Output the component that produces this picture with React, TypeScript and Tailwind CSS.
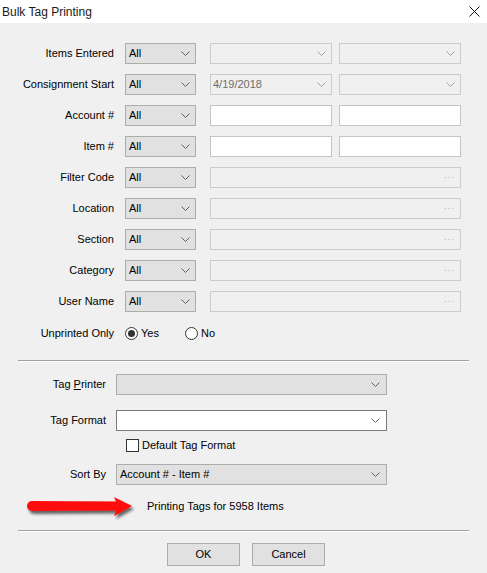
import React from "react";

const FONT = { fontFamily: '"Segoe UI", "Liberation Sans", Arial, sans-serif' };

const Chevron = ({ color = "#606060" }: { color?: string }) => (
  <svg width="9" height="5" viewBox="0 0 9 5" className="shrink-0">
    <path d="M0.5 0.5 L4.5 4.5 L8.5 0.5" fill="none" stroke={color} strokeWidth="1" />
  </svg>
);

function AllCombo() {
  return (
    <div className="w-[71px] h-[21px] flex items-center justify-between pl-[3px] pr-[5px] bg-[#e1e1e1] border border-[#adadad]">
      <span>All</span>
      <Chevron />
    </div>
  );
}

function DisabledCombo({ text }: { text?: string }) {
  return (
    <div className="w-[122px] h-[21px] flex items-center justify-between pl-[2px] pr-[5px] bg-[#f0f0f0] border border-[#cccccc]">
      <span className="text-[#6d6d6d]">{text}</span>
      <Chevron color="#a0a0a0" />
    </div>
  );
}

function TextBox() {
  return <div className="w-[122px] h-[21px] bg-white border border-[#c4c4c4]" />;
}

function EllipsisBox() {
  return (
    <div className="w-[251px] h-[21px] flex items-center justify-end pr-[5px] bg-[#f0f0f0] border border-[#cccccc]">
      <span className="text-[8px] tracking-[1px] text-[#a0a0a0] leading-none">···</span>
    </div>
  );
}

type Filter = { label: string; kind: "combo" | "date" | "text" | "ellipsis" };

const FILTERS: Filter[] = [
  { label: "Items Entered", kind: "combo" },
  { label: "Consignment Start", kind: "date" },
  { label: "Account #", kind: "text" },
  { label: "Item #", kind: "text" },
  { label: "Filter Code", kind: "ellipsis" },
  { label: "Location", kind: "ellipsis" },
  { label: "Section", kind: "ellipsis" },
  { label: "Category", kind: "ellipsis" },
  { label: "User Name", kind: "ellipsis" },
];

function FilterRow({ label, kind }: Filter) {
  return (
    <div className="flex items-center h-[21px]">
      <div className="w-[115px] text-right pr-[1px]">{label}</div>
      <div className="ml-[10px]">
        <AllCombo />
      </div>
      <div className="ml-[14px] flex gap-[7px]">
        {kind === "combo" && (
          <>
            <DisabledCombo />
            <DisabledCombo />
          </>
        )}
        {kind === "date" && (
          <>
            <DisabledCombo text="4/19/2018" />
            <DisabledCombo />
          </>
        )}
        {kind === "text" && (
          <>
            <TextBox />
            <TextBox />
          </>
        )}
        {kind === "ellipsis" && <EllipsisBox />}
      </div>
    </div>
  );
}

function Radio({ checked, label }: { checked?: boolean; label: string }) {
  return (
    <div className="flex items-center">
      <div className="w-[13px] h-[13px] rounded-full border border-[#333333] bg-white flex items-center justify-center">
        {checked && <div className="w-[7px] h-[7px] rounded-full bg-[#333333]" />}
      </div>
      <span className="ml-[3px]">{label}</span>
    </div>
  );
}

function BigCombo({ text, tone }: { text?: string; tone: "gray" | "white" }) {
  return (
    <div
      className={
        tone === "white"
          ? "w-[271px] h-[21px] flex items-center justify-between pl-[3px] pr-[6px] bg-white border border-[#7a7a7a]"
          : "w-[271px] h-[21px] flex items-center justify-between pl-[3px] pr-[6px] bg-[#e1e1e1] border border-[#adadad]"
      }
    >
      <span>{text}</span>
      <Chevron />
    </div>
  );
}

function Separator() {
  return <div className="mx-[18px] h-[2px] border-t border-[#a0a0a0] border-b border-b-white" />;
}

function RedArrow() {
  return (
    <svg width="112" height="30" viewBox="0 0 112 30">
      <defs>
        <filter id="sh" x="-10%" y="-30%" width="130%" height="180%">
          <feDropShadow dx="2" dy="3" stdDeviation="1.5" floodColor="#000" floodOpacity="0.6" />
        </filter>
      </defs>
      <path
        d="M6 10 L90 10.5 L88 6 L106 15 L88 25 L90 19.5 L6 20 A5 5 0 0 1 6 10 Z"
        fill="#ff0a0a"
        filter="url(#sh)"
      />
    </svg>
  );
}

export default function App() {
  return (
    <div className="w-[487px] h-[573px] bg-[#f0f0f0] text-[11px] text-black flex flex-col" style={FONT}>
      <div className="h-[23px] bg-white flex items-center justify-between pl-[2px] pr-[7px] shrink-0">
        <span className="text-[12px] text-[#1a1a1a]">Bulk Tag Printing</span>
        <svg width="11" height="11" viewBox="0 0 11 11">
          <path d="M0.5 0.5 L10.5 10.5 M10.5 0.5 L0.5 10.5" stroke="#111" strokeWidth="1" />
        </svg>
      </div>

      <div className="flex flex-col gap-[10px] pt-[20px]">
        {FILTERS.map((f) => (
          <FilterRow key={f.label} {...f} />
        ))}
        <div className="flex items-center h-[20px] mt-[1px]">
          <div className="w-[115px] text-right pr-[1px]">Unprinted Only</div>
          <div className="ml-[10px] w-[60px]">
            <Radio checked label="Yes" />
          </div>
          <Radio label="No" />
        </div>
      </div>

      <div className="mt-[17px]">
        <Separator />
      </div>

      <div className="flex flex-col pt-[12px]">
        <div className="flex items-center h-[21px]">
          <div className="w-[106px] text-right">
            Tag <span className="underline">P</span>rinter
          </div>
          <div className="ml-[10px]">
            <BigCombo tone="gray" />
          </div>
        </div>
        <div className="flex items-center h-[21px] mt-[15px]">
          <div className="w-[106px] text-right">Tag Format</div>
          <div className="ml-[10px]">
            <BigCombo tone="white" />
          </div>
        </div>
        <div className="flex items-center h-[14px] mt-[7px] pl-[126px]">
          <div className="w-[13px] h-[13px] border border-[#333333] bg-white" />
          <span className="ml-[3px]">Default Tag Format</span>
        </div>
        <div className="flex items-center h-[21px] mt-[12px]">
          <div className="w-[106px] text-right">Sort By</div>
          <div className="ml-[10px]">
            <BigCombo tone="gray" text="Account # - Item #" />
          </div>
        </div>
        <div className="flex items-center h-[30px] mt-[6px]">
          <div className="ml-[26px]">
            <RedArrow />
          </div>
          <span className="ml-[9px]">Printing Tags for 5958 Items</span>
        </div>
      </div>

      <div className="mt-[9px]">
        <Separator />
      </div>

      <div className="flex gap-[12px] mt-[11px] pl-[167px]">
        <button className="w-[73px] h-[23px] bg-[#e1e1e1] border border-[#adadad]">OK</button>
        <button className="w-[73px] h-[23px] bg-[#e1e1e1] border border-[#adadad]">Cancel</button>
      </div>
    </div>
  );
}
